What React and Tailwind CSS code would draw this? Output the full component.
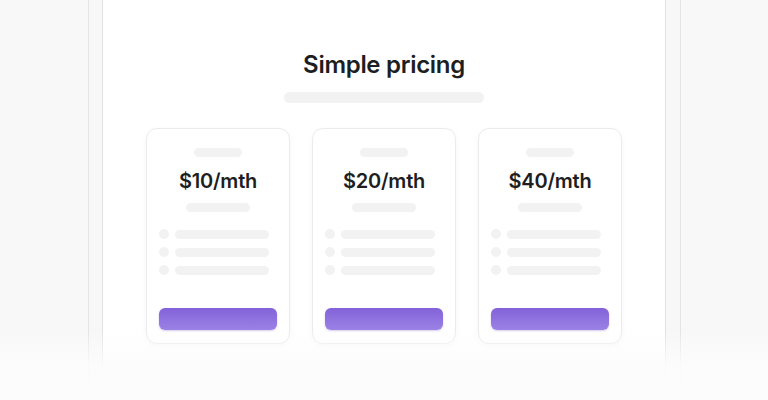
const plans = ['$10/mth', '$20/mth', '$40/mth'];

function Bar({ className }) {
  return <div className={`rounded-full bg-[#f2f2f3] ${className}`} />;
}

function PlanCard({ price }) {
  return (
    <div className="flex w-[144px] flex-col items-center rounded-[11px] border border-[#ebebec] bg-white px-[12px] pt-[19px] pb-[13px] shadow-[0_2px_6px_rgba(0,0,0,0.04)]">
      <Bar className="h-[9px] w-[48px]" />
      <div className="mt-[10px] text-[20px] leading-[28px] font-semibold tracking-[-0.2px] text-[#1d1e22]">{price}</div>
      <Bar className="mt-[8px] h-[9px] w-[64px]" />
      <div className="mt-[17px] flex w-full flex-col gap-[8px]">
        {[0, 1, 2].map((i) => (
          <div key={i} className="flex items-center gap-[6px]">
            <div className="h-[10px] w-[10px] rounded-full bg-[#f2f2f3]" />
            <Bar className="h-[9px] w-[94px]" />
          </div>
        ))}
      </div>
      <div className="mt-[33px] h-[22px] w-full rounded-[6px] bg-gradient-to-b from-[#8362d9] to-[#9b82e5] shadow-[0_1px_2px_rgba(90,60,180,0.25)]" />
    </div>
  );
}

export default function App() {
  return (
    <div
      className="relative h-[400px] w-[768px] overflow-hidden bg-[#f8f8f8]"
      style={{ fontFamily: 'Inter, "Noto Sans", sans-serif' }}
    >
      <div className="ml-[88px] h-[400px] w-[593px] border-x border-[#e4e4e5] bg-[#f7f7f8] pr-[14px] pl-[13px]">
        <div className="flex h-full flex-col items-center border-x border-[#e1e1e2] bg-white pt-[49px]">
          <h1 className="text-[24px] leading-[32px] font-semibold tracking-[-0.3px] text-[#1d1e22]">Simple pricing</h1>
          <Bar className="mt-[11px] h-[11px] w-[200px]" />
          <div className="mt-[25px] flex gap-[22px]">
            {plans.map((p) => (
              <PlanCard key={p} price={p} />
            ))}
          </div>
        </div>
      </div>
      <div className="pointer-events-none absolute inset-x-0 bottom-0 h-[70px] bg-gradient-to-b from-[#fcfcfc00] via-[#fcfcfce6] to-[#fcfcfc]" />
    </div>
  );
}
